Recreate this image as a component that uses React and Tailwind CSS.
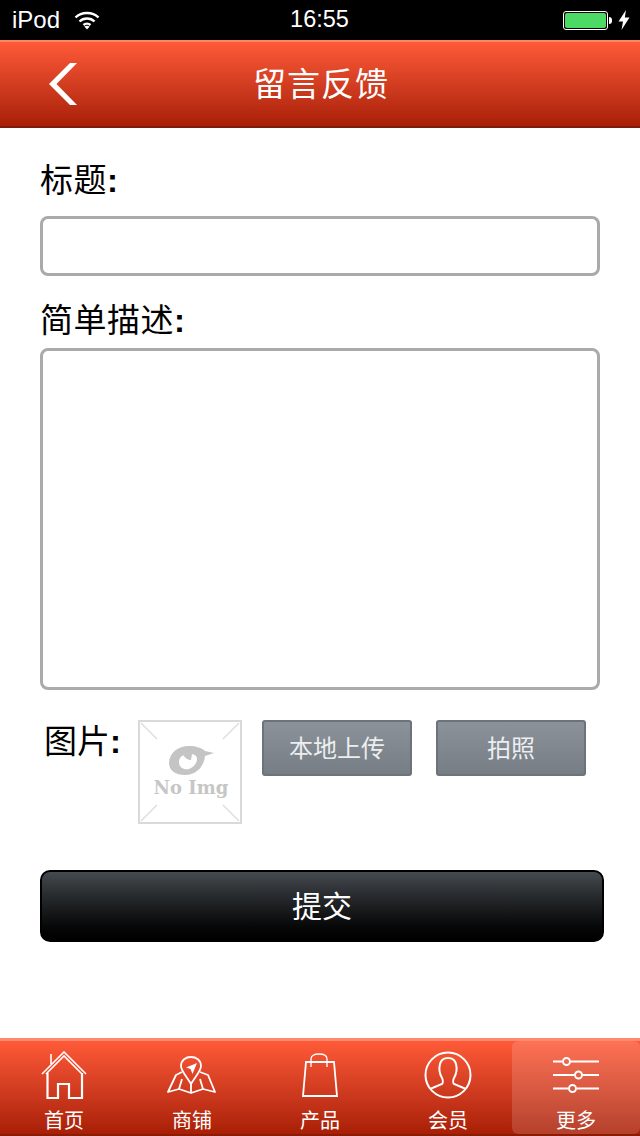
import React from "react";

const cjk = "font-['Liberation_Sans','Noto_Sans_CJK_SC',sans-serif]";

function WifiIcon() {
  return (
    <svg width="26" height="20" viewBox="0 0 26 20" fill="none" stroke="#fff" strokeWidth="2.4">
      <path d="M1.5 7.5C7.5 1.5 18.5 1.5 24.5 7.5" />
      <path d="M5.5 11.5C9.5 7.5 16.5 7.5 20.5 11.5" />
      <path d="M9.5 15C11.5 13.2 14.5 13.2 16.5 15" />
      <path d="M13 19.5L10.3 16.6C12 15.6 14 15.6 15.7 16.6Z" fill="#fff" stroke="none" />
    </svg>
  );
}

function StatusBar() {
  return (
    <div className={`flex h-10 shrink-0 items-center justify-between bg-black pl-3 pr-[10px] text-white ${cjk}`}>
      <div className="flex w-[200px] items-center gap-[14px] text-[24px] leading-none">
        <span>iPod</span>
        <WifiIcon />
      </div>
      <span className="pr-[3px] text-[23.5px] leading-none">16:55</span>
      <div className="flex w-[200px] items-center justify-end gap-[6px]">
        <div className="flex items-center gap-[1px]">
          <div className="h-[19px] w-[45px] rounded-[3px] border border-white p-[1px]">
            <div className="h-full w-full rounded-[2px] bg-[#4cd964]" />
          </div>
          <div className="h-[7px] w-[3px] rounded-r-sm bg-white" />
        </div>
        <svg width="12" height="20" viewBox="0 0 12 20" fill="#fff">
          <path d="M8 0L0.5 11.5H5L3.5 20L11.5 7.5H6.8Z" />
        </svg>
      </div>
    </div>
  );
}

function Header() {
  return (
    <div className="relative flex h-[88px] shrink-0 items-center justify-center border-t-2 border-b-2 border-t-[#ff8468] border-b-[#7d1c0a] bg-gradient-to-b from-[#ff5a38] to-[#a81f06]">
      <svg className="absolute left-[48px] top-[21px]" width="30" height="44" viewBox="0 0 30 44" fill="#fff">
        <path d="M22 0H29L8.5 21L29 42H22L1 21Z" />
      </svg>
      <h1 className={`pl-[2px] text-[33px] leading-none tracking-[1px] text-[#fff] ${cjk}`}>留言反馈</h1>
    </div>
  );
}

function NoImage() {
  return (
    <div className="relative flex h-[104px] w-[104px] shrink-0 flex-col items-center border-2 border-[#d9d9d9] bg-white">
      <svg className="absolute inset-0" width="100" height="100" viewBox="0 0 100 100" stroke="#dedede" strokeWidth="1.5" fill="none">
        <path d="M1 1L17 17M99 1L83 17M1 99L17 83M99 99L83 83" />
      </svg>
      <svg className="mt-[23px] ml-[2px] blur-[0.6px]" width="46" height="31" viewBox="0 0 46 31">
        <path
          fillRule="evenodd"
          fill="#c4c4c4"
          d="M1 18C1 8 10 1 21 1C28 1 34 3 37 6L46 8L37 11C36 21 29 30 17 30C8 30 1 26 1 18ZM11 17C11 23 16 25 21 24C27 22 31 15 28 11C24 7 11 8 11 17Z"
        />
        <path d="M15 10C18 8 22 8 24 9L23 15C20 15 17 13 15 10Z" fill="#c4c4c4" />
      </svg>
      <span className="mt-[2px] ml-[2px] font-['DejaVu_Serif',serif] text-[18px] font-bold leading-[20px] text-[#c6c6c6]">
        No Img
      </span>
    </div>
  );
}

function GrayButton({ label }) {
  return (
    <button className={`h-14 w-[150px] shrink-0 rounded-[3px] border-2 border-[#6c737a] bg-gradient-to-b from-[#8b9299] to-[#767d84] pt-[1px] text-[24px] text-[#eceeef] ${cjk}`}>
      {label}
    </button>
  );
}

function FeedbackForm() {
  return (
    <main className={`flex flex-1 flex-col bg-white pl-10 pr-9 text-black ${cjk}`}>
      <label className="mt-[32px] h-[36px] text-[33px] leading-[42px] tracking-[0.5px]">
        标题<b>:</b>
      </label>
      <input className="mt-[20px] h-[60px] w-[560px] rounded-[8px] border-[3px] border-[#aaaaaa] bg-white" />
      <label className="mt-[24px] h-[36px] text-[33px] leading-[42px] tracking-[0.5px]">
        简单描述<b>:</b>
      </label>
      <textarea className="mt-[12px] h-[342px] w-[560px] resize-none rounded-[8px] border-[3px] border-[#aaaaaa] bg-white" />

      <div className="mt-[30px] flex items-start">
        <span className="ml-[4px] w-[94px] pt-[2px] text-[33px] leading-[40px]">
          图片<b>:</b>
        </span>
        <NoImage />
        <div className="ml-[20px] flex gap-6">
          <GrayButton label="本地上传" />
          <GrayButton label="拍照" />
        </div>
      </div>

      <button className="mt-[46px] h-[72px] w-[564px] rounded-[10px] border-2 border-black bg-gradient-to-b from-[#454a4f] to-[#010101] text-[30px] text-white">
        提交
      </button>
    </main>
  );
}

const HomeIcon = (
  <svg width="46" height="48" viewBox="0 0 46 48" fill="none" stroke="#fff" strokeWidth="2">
    <path d="M1 23L23 1L45 23M5 23L23 5L41 23" strokeWidth="1.6" />
    <path d="M10 3V13" strokeWidth="1.6" />
    <path d="M6.5 22V47H17V33H28V47H41V22" strokeWidth="2.2" />
  </svg>
);

const MapIcon = (
  <svg width="50" height="38" viewBox="0 0 50 38" fill="none" stroke="#fff" strokeWidth="1.8">
    <path d="M24 28C20 21 14 15 14 10C14 4 19 1 24 1C29 1 34 4 34 10C34 15 28 21 24 28Z" />
    <path d="M30 7L19 11.5L23.5 13L25.5 18Z" fill="#fff" stroke="none" />
    <path d="M15 16L9 19L1 36L12 33L24 37L36 33L48 36L41 19L33 16" strokeLinejoin="round" />
    <path d="M12 33L15 23M36 33L33 23M24 28V37" />
  </svg>
);

const BagIcon = (
  <svg width="36" height="44" viewBox="0 0 36 44" fill="none" stroke="#fff" strokeWidth="1.8">
    <path d="M4 9H32L35 43H1Z" />
    <path d="M9 14V6C9 3 12 1 17 1C22 1 25 3 25 6V14" strokeWidth="1.3" />
  </svg>
);

const MemberIcon = (
  <svg width="48" height="48" viewBox="0 0 48 48" fill="none" stroke="#fff" strokeWidth="2">
    <circle cx="24" cy="24" r="22.5" />
    <path d="M6 38L18 33C19 32 19 29 18 27C15 22 15 17 16 13C17 9 20 7 24 7C28 7 31 9 32 13C33 17 33 22 30 27C29 29 29 32 30 33L42 38" />
  </svg>
);

const MoreIcon = (
  <svg width="46" height="36" viewBox="0 0 46 36" fill="none" stroke="#fff" strokeWidth="2">
    <path d="M0 4.5H9M18 4.5H46M0 18H21M30 18H46M0 31.5H15M24 31.5H46" />
    <circle cx="13.5" cy="4.5" r="3.5" />
    <circle cx="25.5" cy="18" r="3.5" />
    <circle cx="19.5" cy="31.5" r="3.5" />
  </svg>
);

const tabs = [
  { label: "首页", icon: HomeIcon },
  { label: "商铺", icon: MapIcon },
  { label: "产品", icon: BagIcon },
  { label: "会员", icon: MemberIcon },
  { label: "更多", icon: MoreIcon, active: true },
];

function TabBar() {
  return (
    <nav className="flex h-[98px] shrink-0 border-t-[3px] border-b-2 border-t-[#ff8a70] border-b-[#8a1c06] bg-gradient-to-b from-[#ff5a38] to-[#a81f06]">
      {tabs.map((tab) => (
        <div
          key={tab.label}
          className={`flex w-32 flex-col items-center ${tab.active ? "rounded-[6px] bg-white/15" : ""}`}
        >
          <div className="flex h-[71px] items-center justify-center pt-[1px]">{tab.icon}</div>
          <span className={`text-[20px] leading-[26px] text-white ${cjk}`}>{tab.label}</span>
        </div>
      ))}
    </nav>
  );
}

export default function App() {
  return (
    <div className="flex h-[1136px] w-[640px] flex-col overflow-hidden bg-white">
      <StatusBar />
      <Header />
      <FeedbackForm />
      <TabBar />
    </div>
  );
}
